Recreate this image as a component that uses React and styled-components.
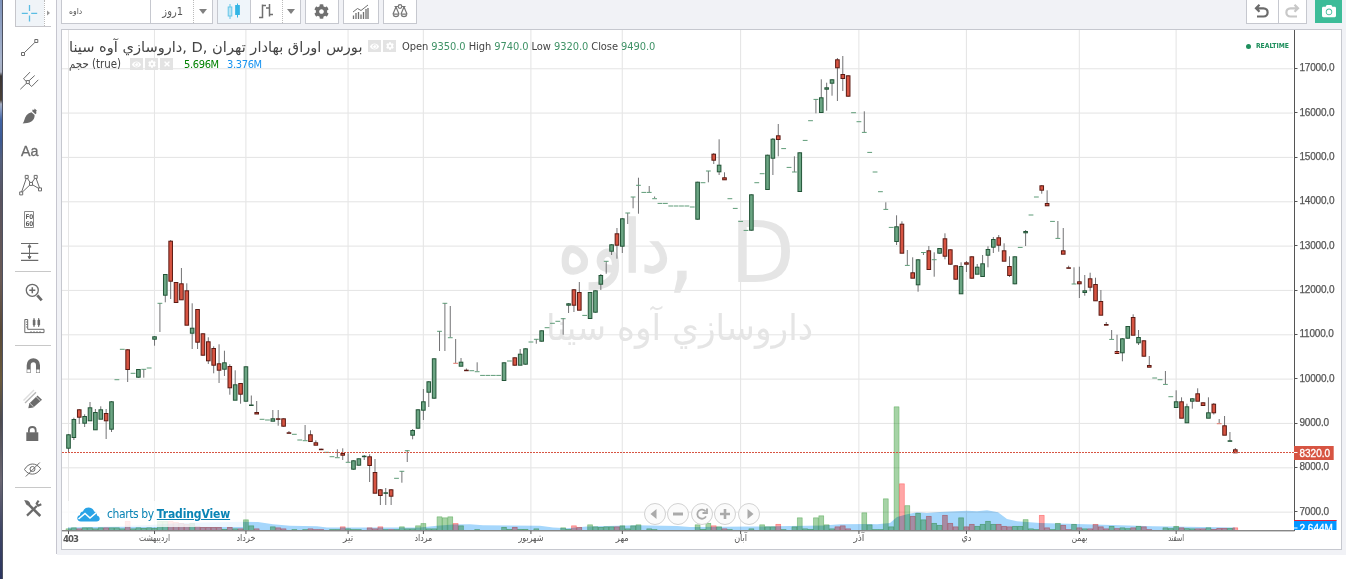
import React from "react";
import styled, { createGlobalStyle } from "styled-components";
import { FaCog, FaEye, FaCamera, FaTimes } from "react-icons/fa";

const UI_FONT = '"DejaVu Sans Condensed", "DejaVu Sans", sans-serif';

// geometry of the price pane
const FIRST_BAR = 68.5;
const BAR_STEP = 5.377;
const BASE_LINE = 530;
const barX = (i) => FIRST_BAR + BAR_STEP * i;
const priceY = (price) => 69 + ((17000 - price) / 1000) * 44.34;

// kind, body top, body bottom, high, low ("-" is a flat session)
const candles = [
  ["u", 434.3, 448.7, 434, 452.5], ["u", 419, 438, 417.7, 440], ["d", 409.3, 417.7, 409, 424],
  ["u", 416, 423.7, 414.3, 427], ["u", 407.3, 421.3, 402, 421], ["u", 412, 430.3, 409, 430],
  ["u", 409.3, 419.7, 406.3, 419], ["d", 413, 421.3, 409, 439], ["u", 401.3, 429.7, 401, 432],
  ["-", 379.7], ["-", 349.3], ["d", 349.3, 370, 349, 382], ["-", 373.3], ["u", 369, 377.7],
  ["-", 369.3, 369.3, 369, 377.7], ["-", 368], ["u", 336.3, 339.7, 336, 345.7],
  ["-", 303.3, 303.3, 303, 332], ["u", 274, 295.7, 274, 302.3], ["d", 240.7, 281.7, 240, 299],
  ["d", 282, 303], ["d", 283.3, 300.3, 268, 300], ["d", 290.3, 325.7, 283.3, 325],
  ["u", 327.7, 333.7, 303.3, 349], ["d", 309, 342.7, 309, 349], ["d", 333.3, 355.7],
  ["d", 341.3, 361.3, 337.3, 364], ["d", 348, 365.7, 346.3, 373.3], ["d", 363.3, 370.7, 344.3, 383],
  ["u", 362.3, 369.7, 350.7, 376], ["d", 366, 388.3, 364.3, 394.7], ["u", 384.3, 400.7, 370.3, 400],
  ["d", 383, 394.7, 383, 403.7], ["u", 366.3, 401.7], ["u", 404.5, 406, 395.5, 406],
  ["d", 412, 414.5, 401, 414], ["-", 419.3], ["-", 420], ["u", 418.3, 421.7, 410, 421],
  ["d", 418.3, 419.7, 410, 425.7], ["d", 418.3, 426.7], ["d", 432.3, 433.7, 431, 433], ["-", 434.3],
  ["-", 440], ["-", 440.7, 440.7, 425, 440], ["d", 434.3, 442, 430.3, 442], ["d", 442.3, 445.7, 440.3, 445],
  ["d", 448.7, 450], ["-", 452.3], ["-", 456.7], ["-", 457.7, 457.7, 449.3, 457],
  ["d", 453, 455.7, 448.3, 460], ["-", 462.3, 462.3, 453.3, 462], ["u", 460.3, 469.7], ["u", 458.3, 465.7],
  ["u", 455.7, 457, 455, 460], ["d", 456.3, 466, 454.3, 482], ["d", 472, 493.7, 459, 493],
  ["d", 489.3, 496, 489, 505], ["u", 492.3, 493.7, 488, 505], ["d", 489.3, 496.7, 489, 505],
  ["-", 478.3], ["-", 471.3, 471.3, 471, 482.7], ["-", 450.7, 450.7, 450, 462],
  ["u", 430, 435.7, 429, 439.3], ["u", 409.3, 428.7], ["u", 401.3, 410.7, 389, 420],
  ["u", 381.3, 392.7, 381, 407], ["u", 358.3, 398.7], ["-", 331.3, 331.3, 331, 351],
  ["-", 303.3, 303.3, 303, 351], ["-", 337.7, 337.7, 306, 337], ["r", 363.3, 363.3, 339, 363],
  ["u", 361.7, 366.7, 358, 366], ["d", 369.7, 371, 368.5, 371], ["-", 370.7], ["-", 371.7, 371.7, 362.3, 371],
  ["-", 375.4], ["-", 375.4], ["-", 375.4], ["-", 375.4], ["u", 362.3, 381], ["-", 361],
  ["d", 357.3, 365.7], ["u", 353.7, 365.7, 349, 365], ["u", 348.3, 364.7], ["-", 342],
  ["-", 339.3, 339.3, 339, 343.7], ["u", 330.3, 341.7], ["-", 327.7], ["-", 323.3], ["-", 321.3],
  ["-", 318.7, 318.7, 318, 334.7], ["u", 303.3, 305.7, 303, 313], ["d", 289.3, 305.7, 289, 312],
  ["d", 292, 310.7, 282, 310], ["-", 315.4], ["u", 292, 319], ["u", 290.3, 312.7],
  ["u", 275, 284.7, 274, 290], ["-", 261.3, 261.3, 261, 273.7], ["u", 244.3, 251.7, 244, 255],
  ["d", 233.3, 245.7, 228, 258.7], ["u", 218.3, 246.7, 218, 253], ["-", 213, 213, 213, 224],
  ["-", 197, 197, 197, 208.3], ["-", 185.3, 185.3, 177.7, 213.7], ["-", 192.4],
  ["-", 192.4, 192.4, 186, 192], ["-", 198.7, 198.7, 196.5, 198], ["-", 203.4], ["-", 203.4],
  ["-", 206], ["-", 206], ["-", 206], ["-", 206], ["-", 207], ["u", 181.7, 219.7], ["-", 182.7],
  ["-", 171, 171, 171, 182.3], ["d", 153.7, 160.7, 153, 164], ["u", 164.7, 172.3, 139.3, 175],
  ["d", 177.3, 180.3, 172.3, 180], ["-", 198.7], ["-", 208.4], ["-", 221.4], ["-", 230.4],
  ["u", 194.3, 230.7], ["-", 182.7], ["-", 173.7], ["u", 154.7, 190], ["u", 138.7, 158.7, 138, 175],
  ["d", 135.3, 140, 124, 156.3], ["-", 148.6], ["-", 167.4], ["-", 172, 172, 156.3, 172],
  ["u", 152.3, 192], ["-", 140.4], ["-", 120.7], ["-", 99.4, 99.4, 99, 113.3], ["u", 97.3, 113, 79.3, 113],
  ["u", 87.3, 89.7, 82.7, 110.7], ["u", 79.3, 83.7, 79, 95.7], ["d", 59.3, 68.3, 58, 101],
  ["d", 74, 79, 56, 91], ["d", 75.3, 96.7], ["-", 112.7], ["-", 121.7], ["-", 132.4, 132.4, 111.3, 132],
  ["-", 152.4], ["-", 172], ["-", 191.7], ["-", 209.4, 209.4, 202.3, 209], ["-", 227.4],
  ["u", 226.3, 242, 215.3, 245], ["d", 223.7, 253.7, 221.3, 253], ["-", 265.4, 265.4, 250, 265],
  ["d", 272.3, 278.7, 257.3, 278], ["u", 259.3, 285.3, 259, 291.7], ["-", 252.5, 252.5, 252, 255],
  ["d", 250.3, 270, 246, 270], ["-", 259.7, 259.7, 252.3, 276.7], ["u", 248, 253.7],
  ["d", 238.3, 256.7, 233.3, 259.3], ["d", 249.3, 264.7], ["d", 265.3, 279.7], ["u", 266, 294.3, 262.3, 294],
  ["d", 262.3, 264.7, 261, 272], ["d", 256.3, 278.7], ["u", 266.7, 274.7, 264, 274],
  ["u", 263.3, 277, 255, 277], ["u", 249, 255.7, 246.3, 267.3], ["u", 239, 247.7, 237, 253],
  ["d", 237.3, 245.7, 235, 251.7], ["d", 250.3, 261.7, 243.3, 261], ["d", 266, 276, 256.3, 277],
  ["u", 256.3, 284.3], ["-", 247.4], ["u", 231, 233.3, 230, 246], ["-", 215], ["-", 197],
  ["d", 185.3, 190.7, 185, 193.7], ["d", 203, 206.3, 190.3, 206], ["-", 221.4],
  ["-", 238.4, 238.4, 221, 238], ["d", 250.3, 254.7, 228, 254], ["d", 267.3, 268.7, 265.7, 268],
  ["-", 284, 284, 267.3, 284], ["d", 281.3, 284.3, 266.7, 298], ["u", 290.3, 293, 275, 295.7],
  ["d", 278.3, 287.7, 272.7, 291.3], ["d", 284, 301.3, 277.7, 301], ["d", 301, 315.7, 290, 315],
  ["d", 324, 325.7, 322, 325], ["-", 339.4, 339.4, 330, 339], ["d", 351, 354, 334.7, 354],
  ["u", 338.3, 353.3, 338, 361.3], ["u", 326, 338.7], ["d", 317, 335.7, 314.3, 335],
  ["u", 337, 343.3, 330, 345], ["d", 340.3, 356.7], ["d", 365, 367.7, 356, 367], ["-", 378],
  ["-", 379.7], ["-", 384.4, 384.4, 371, 384], ["-", 396.7], ["u", 401.3, 408, 390.3, 408],
  ["d", 401.3, 418.7, 397.3, 418], ["u", 406.3, 423.3, 403.7, 423], ["u", 398.3, 401.7, 398, 408.7],
  ["d", 393.3, 401.7, 388.3, 401], ["d", 402.3, 406], ["u", 412.3, 418.7, 397.3, 418],
  ["d", 403.7, 413.3, 403, 414.5], ["r", 423.7, 423.7, 419, 423], ["d", 425.3, 435.7, 416, 435],
  ["u", 440.3, 441.5, 432, 441], ["d", 449.3, 453.3, 448, 453],
];

// bar index -> [kind, height]
const volumes = {
  0: ["u", 1.5], 1: ["u", 2.5], 2: ["d", 1.5], 3: ["u", 2.5], 4: ["u", 2.5], 5: ["u", 1.5], 6: ["u", 2.5],
  7: ["d", 2.5], 8: ["u", 2.5], 9: ["u", 2.5], 10: ["u", 1.5], 11: ["d", 9], 12: ["u", 1.5], 13: ["u", 2.5],
  14: ["u", 2], 15: ["u", 2.5], 16: ["u", 2], 17: ["u", 9], 18: ["u", 9], 19: ["d", 9], 20: ["d", 8],
  21: ["d", 7], 22: ["d", 6], 23: ["u", 7], 24: ["d", 4], 25: ["d", 3], 26: ["d", 3], 27: ["d", 3],
  28: ["d", 3], 29: ["u", 1], 30: ["d", 3], 31: ["u", 1.5], 32: ["d", 1.5], 33: ["u", 10.5], 34: ["u", 4.5],
  35: ["d", 1.5], 38: ["u", 3.5], 39: ["d", 2.5], 40: ["d", 1.5], 42: ["u", 0.8], 44: ["u", 0.8],
  45: ["d", 1.5], 46: ["d", 0.8], 47: ["d", 0.8], 49: ["u", 0.8], 50: ["u", 0.8], 51: ["d", 3.5],
  52: ["u", 1.5], 53: ["u", 0.8], 54: ["u", 0.8], 56: ["d", 2.5], 57: ["d", 1.5], 58: ["d", 3.5],
  59: ["u", 0.8], 60: ["d", 0.8], 61: ["u", 0.8], 62: ["u", 3.5], 63: ["u", 1.5], 64: ["u", 1.5],
  65: ["u", 4.5], 66: ["u", 6.8], 67: ["u", 1.5], 68: ["u", 1.5], 69: ["u", 13.5], 70: ["u", 12.5],
  71: ["u", 13.5], 72: ["d", 6.8], 73: ["u", 4.5], 76: ["u", 0.8], 81: ["u", 3], 82: ["u", 1],
  83: ["d", 3], 84: ["u", 1], 85: ["u", 1], 87: ["u", 1.5], 92: ["u", 2.5], 93: ["u", 1], 94: ["d", 4.5],
  95: ["d", 3], 97: ["u", 5.5], 98: ["u", 3.5], 99: ["u", 3], 100: ["u", 3.5], 101: ["u", 3.5],
  102: ["d", 3.5], 103: ["u", 4.5], 104: ["u", 1.5], 105: ["u", 4.5], 106: ["u", 5.5], 108: ["u", 1.5],
  109: ["u", 0.8], 117: ["u", 5.5], 118: ["u", 1], 119: ["u", 7], 120: ["d", 4.5], 121: ["u", 3.5],
  122: ["d", 1.5], 123: ["u", 0.8], 127: ["u", 1.5], 129: ["u", 5.5], 130: ["u", 3.5], 131: ["u", 3.5],
  132: ["d", 6], 133: ["u", 0.8], 135: ["u", 3.5], 136: ["u", 12.5], 137: ["u", 1.5], 138: ["u", 1],
  139: ["u", 12.5], 140: ["u", 14.5], 141: ["u", 5.5], 142: ["u", 1.5], 143: ["d", 3.5], 144: ["d", 4.5],
  145: ["d", 1.5], 148: ["u", 17.5], 149: ["u", 5.5], 150: ["u", 0.8], 151: ["u", 0.8], 152: ["u", 31.5],
  153: ["u", 3.5], 154: ["u", 123.5], 155: ["d", 46.5], 156: ["u", 24.7], 157: ["d", 14], 158: ["u", 17],
  159: ["u", 10.5], 160: ["d", 14], 161: ["u", 7], 162: ["u", 5], 163: ["d", 15], 164: ["d", 7],
  165: ["d", 3.5], 166: ["u", 12.5], 167: ["d", 3.5], 168: ["d", 6], 169: ["u", 4], 170: ["u", 6],
  171: ["u", 9], 172: ["u", 6], 173: ["d", 6], 174: ["d", 4], 175: ["d", 3.5], 176: ["u", 4], 177: ["u", 4],
  178: ["u", 10.7], 179: ["u", 1.5], 180: ["u", 0.8], 181: ["d", 15], 182: ["d", 2.5], 183: ["u", 0.8],
  184: ["u", 7], 185: ["d", 5], 186: ["d", 0.8], 187: ["u", 6], 188: ["d", 2.5], 189: ["u", 1.5],
  190: ["d", 1.5], 191: ["d", 6], 192: ["d", 3.5], 193: ["d", 1.5], 194: ["u", 4], 195: ["d", 1.8],
  196: ["u", 2.5], 197: ["u", 1.8], 198: ["d", 2.5], 199: ["u", 4], 200: ["d", 3.5], 201: ["d", 0.8],
  204: ["u", 2.5], 205: ["u", 1.8], 206: ["u", 4], 207: ["d", 2.5], 208: ["u", 1.8], 209: ["u", 1.5],
  210: ["d", 1.5], 211: ["d", 1.5], 212: ["u", 2.5], 213: ["d", 1], 214: ["d", 2], 215: ["d", 2],
  216: ["u", 2], 217: ["d", 2.5],
};

const averageVolume = [
  [68, 527.5], [90, 527], [150, 525], [180, 523], [243, 521.8], [258, 522], [273, 524.3], [290, 525.7],
  [317, 526.3], [327, 527.4], [420, 527.6], [437, 525.7], [453, 524.6], [470, 524.3], [483, 525.3],
  [540, 525.7], [553, 527.4], [567, 528.3], [587, 526.6], [637, 525.3], [677, 526], [690, 527],
  [753, 526.6], [790, 526], [823, 525.6], [840, 524.3], [870, 524], [877, 524.3], [890, 523],
  [897, 517], [907, 514.3], [917, 512.3], [927, 513], [940, 512], [967, 510.7], [977, 511.3],
  [987, 510.3], [998, 512.3], [1007, 519], [1017, 521.3], [1040, 523], [1077, 524], [1120, 525.3],
  [1153, 526.3], [1235, 527.5],
];

const months = [
  { name: "ارديبهشت", bar: 16, width: 31 },
  { name: "خرداد", bar: 33, width: 19 },
  { name: "تير", bar: 52, width: 10 },
  { name: "مرداد", bar: 66, width: 18 },
  { name: "شهريور", bar: 86, width: 25 },
  { name: "مهر", bar: 103, width: 13 },
  { name: "آبان", bar: 125, width: 13 },
  { name: "آذر", bar: 147, width: 11 },
  { name: "دي", bar: 167, width: 10 },
  { name: "بهمن", bar: 188, width: 16 },
  { name: "اسفند", bar: 206, width: 16 },
];

const prices = [17000, 16000, 15000, 14000, 13000, 12000, 11000, 10000, 9000, 8000, 7000];

function Candle({ x, data }) {
  const [kind, top, bottom = top, high = top, low = bottom] = data;
  const flat = kind === "-" || kind === "r";
  const colors = kind === "u" ? ["#6ba583", "#225437"] : ["#d75442", "#5b1a13"];
  return (
    <g>
      {low > high && <rect x={x - 0.5} y={high} width="1" height={low - high} fill="#737375" />}
      {flat ? (
        <rect x={x - 2.4} y={top - 0.5} width="4.8" height="1" fill={kind === "r" ? "#e0776a" : "#5f9c78"} />
      ) : (
        <rect
          x={x - 1.8}
          y={top + 0.5}
          width="3.6"
          height={Math.max(bottom - top - 1, 0.5)}
          fill={colors[0]}
          stroke={colors[1]}
        />
      )}
    </g>
  );
}

function VolumeBar({ x, kind, height }) {
  const color = kind === "u" ? "#008000" : "#ff0000";
  return (
    <g fill={color}>
      <rect x={x - 2.7} y={BASE_LINE - height} width="5.4" height={height} fillOpacity="0.35" />
      <path
        d={`M${x - 2.4} ${BASE_LINE}V${BASE_LINE - height + 0.4}h4.8V${BASE_LINE}`}
        fill="none"
        stroke={color}
        strokeOpacity="0.22"
        strokeWidth="0.8"
      />
    </g>
  );
}

function Chart() {
  const area = averageVolume.map((p) => p.join(" ")).join("L");
  return (
    <ChartSvg viewBox="62 30 1279 519">
      <g fill="#e6e6e6">
        {months.map((m) => (
          <rect key={m.bar} x={barX(m.bar) - 0.6} y="30" width="1.1" height="501" />
        ))}
        <rect x="68" y="30" width="1" height="501" />
        {prices.map((p) => (
          <rect key={p} x="62" y={priceY(p) - 0.8} width="1231" height="1.1" />
        ))}
      </g>

      <g fill="#e5e5e5" fontFamily={UI_FONT}>
        <g stroke="#e5e5e5" strokeWidth="1.4">
          <text x="558" y="272" fontSize="72" textLength="112" lengthAdjust="spacingAndGlyphs">داوه</text>
          <text x="669" y="281.5" fontSize="85">,</text>
        </g>
        <text x="730" y="281.5" fontSize="85" textLength="65" lengthAdjust="spacingAndGlyphs">D</text>
        <text x="546" y="340" fontSize="36" textLength="267" lengthAdjust="spacingAndGlyphs">داروسازي آوه سينا</text>
      </g>

      {Object.entries(volumes).map(([i, [kind, height]]) => (
        <VolumeBar key={i} x={barX(Number(i))} kind={kind} height={height} />
      ))}
      <AverageArea d={`M${area}V${BASE_LINE}H68Z`} />

      {candles.map((c, i) => (
        <Candle key={i} x={barX(i)} data={c} />
      ))}

      <path d="M62 452.5H1294" stroke="#d75442" strokeDasharray="2 1" />

      <path d="M62 530.8H1294.5M1294.5 30V531" stroke="#555" fill="none" />
      <g fill="#555" fontFamily='"Liberation Sans", sans-serif' fontSize="10" letterSpacing="-0.2">
        {prices.map((p) => (
          <React.Fragment key={p}>
            <rect x="1294" y={Math.round(priceY(p)) - 1} width="3.5" height="1" />
            <AxisText x="1299.5" y={priceY(p) + 2.4}>{`${p}.0`}</AxisText>
          </React.Fragment>
        ))}
      </g>

      <g fontFamily={UI_FONT} fontSize="9.5" fill="#555">
        <rect x="68" y="531" width="1" height="3" />
        <text x="63" y="542" fontWeight="bold" fontSize="9.5" textLength="16">403</text>
        {months.map((m) => (
          <React.Fragment key={m.bar}>
            <rect x={barX(m.bar) - 0.5} y="531" width="1" height="3" />
            <text
              x={barX(m.bar) - m.width / 2}
              y="541"
              textLength={m.width}
              lengthAdjust="spacingAndGlyphs"
            >
              {m.name}
            </text>
          </React.Fragment>
        ))}
      </g>

      <g fontFamily='"Liberation Sans", sans-serif' fontSize="10" fill="#fff">
        <rect x="1294" y="446" width="39.7" height="14" fill="#d75442" />
        <rect x="1294" y="452" width="3.5" height="1" />
        <text x="1299.5" y="457.3" stroke="#fff" strokeWidth="0.3">8320.0</text>
        <clipPath id="pane-bottom">
          <rect x="1294" y="518" width="46" height="12" />
        </clipPath>
        <g clipPath="url(#pane-bottom)">
          <rect x="1294" y="520" width="42.5" height="12" fill="#0496ff" />
          <rect x="1294" y="520" width="42.5" height="1" fill="#e5213c" />
          <rect x="1294" y="527.5" width="3.5" height="1" />
          <text x="1299.5" y="532.3" stroke="#fff" strokeWidth="0.3">2.644M</text>
        </g>
      </g>
    </ChartSvg>
  );
}

// Drawings of the left bar share one coordinate space, each one starts at its own offset.
const drawTools = [
  {
    top: 30,
    art: (
      <>
        <path d="M24.5 52.5L34.8 42.5" />
        <path d="M21.5 52.5h3v3h-3zM34.8 39.5h3v3h-3z" />
      </>
    ),
  },
  {
    top: 64.2,
    art: (
      <>
        <path d="M20.3 89.5L27 83M29 81L34.7 75.7M23.5 79L30 72.3M31.7 86.7L38.3 80M23.5 79L31.7 86.7" />
        <path d="M26.3 80.8h3v3h-3z" fill="#fff" />
      </>
    ),
  },
  {
    top: 98.4,
    art: (
      <g fill="#6b6b6b" stroke="none">
        <path d="M22.7 124C24.6 121.5 24.2 118.6 26.5 115.6C27.8 114 30 113.2 31.4 112.6L34.6 115.4C34.8 118 33.6 120.4 31.4 121.8C28.8 123.3 25.6 123.4 22.7 124Z" />
        <path d="M32.2 111.6L32.6 109.8L34.2 110.4L34.6 109L36.8 110.8L36 112.4L36.6 113.4L35.4 114.6Z" />
      </g>
    ),
  },
  {
    top: 132.6,
    art: (
      <text x="21" y="155.8" fontSize="14.2" fill="#6b6b6b" stroke="#6b6b6b" strokeWidth="0.3" fontFamily='"Liberation Sans", sans-serif'>
        Aa
      </text>
    ),
  },
  {
    top: 166.8,
    art: (
      <>
        <path d="M21.2 193L26.7 177L31 183.7L35.7 177L40 189L31 183.7Z" />
        <path
          fill="#fff"
          d="M19.7 191.7h3v3h-3zM25.2 175.2h3v3h-3zM29.5 182.2h3v3h-3zM34.2 175.2h3v3h-3zM38.5 187.7h3v3h-3z"
        />
      </>
    ),
  },
  {
    top: 201,
    art: (
      <>
        <path d="M24.5 211.5h9v16h-9z" stroke="#8a8a8a" />
        <g fontSize="6.5" fontWeight="bold" fill="#555" stroke="none" fontFamily='"DejaVu Sans Mono", monospace'>
          <text x="25.4" y="218.8">FO</text>
          <text x="25.4" y="225.6">6O</text>
        </g>
      </>
    ),
  },
  {
    top: 235.2,
    art: (
      <>
        <path d="M21 243.7h17.3M21 253.6h17.3M21 260.5h17.3" strokeWidth="1.2" />
        <path d="M29.5 245v14" />
        <path d="M28 247.3l1.500-2.400 1.500 2.400zM28 256.8l1.500 2.400 1.500-2.400z" fill="#6b6b6b" />
      </>
    ),
  },
];

const viewTools = [
  {
    top: 276,
    art: (
      <>
        <circle cx="32.3" cy="291.3" r="6" strokeWidth="1.3" />
        <path d="M29.3 291.3h6M32.3 288.3v6" strokeWidth="1.5" />
        <path d="M37.3 296.3L41.7 301.3" strokeWidth="2.8" />
      </>
    ),
  },
  {
    top: 308,
    art: (
      <>
        <path d="M24.8 318.5h2.9v9.8h16.3v3.3H24.8z" />
        <path d="M26 321h1.6M26 323.5h1.6M26 326h1.6M31 330v1.6M34 330v1.6M37 330v1.6M40 330v1.6" strokeWidth="0.8" />
        <path d="M34 317v9M38.7 317v9" />
        <path d="M33.3 319h1.6v5h-1.6zM38 319h1.6v5h-1.6z" fill="#6b6b6b" />
      </>
    ),
  },
];

const editTools = [
  {
    top: 349,
    art: (
      <>
        <path d="M28.7 373V365.2C28.7 358.5 38 358.5 38 365.2V373" strokeWidth="4" />
        <path d="M27.2 369.5h3v3h-3zM36.5 369.5h3v3h-3z" fill="#fff" stroke="none" />
      </>
    ),
  },
  {
    top: 383,
    art: (
      <>
        <path d="M23.5 400.5L34 390" stroke="#dedede" strokeWidth="1.4" />
        <path d="M25 403L36 392.2" stroke="#b5b5b5" strokeWidth="1.3" />
        <path d="M28.3 408.3L29.3 403.6L37.5 395.6L42 399.8L33.3 407.4Z" fill="#6b6b6b" stroke="none" />
        <path d="M30 403.4L33.6 406.8M36 396.6L40.4 400.8" stroke="#fff" strokeWidth="0.7" />
      </>
    ),
  },
  {
    top: 416,
    art: (
      <>
        <path d="M26.3 431.3h12v8.700h-12z" fill="#6b6b6b" stroke="none" />
        <path d="M28.900 431.800V429.300C28.900 424.900 35.700 424.900 35.700 429.300V431.800" strokeWidth="1.8" />
      </>
    ),
  },
  {
    top: 452,
    art: (
      <>
        <path d="M24.5 470.5C28.5 463.3 36 463.3 40.7 469.8C36.5 476.8 28.5 476.8 24.5 470.5Z" />
        <circle cx="32.5" cy="470" r="2.5" />
        <path d="M25.8 477.5L39.8 463.5" />
      </>
    ),
  },
];

const settingsTools = [
  {
    top: 491,
    art: (
      <>
        <path d="M29 504.8L40.3 516" strokeWidth="2.6" />
        <path d="M24 500.3C27.5 499.6 30.3 501.5 30.3 504.3C30.3 506 28 506.2 26.5 504.8C25.6 503.8 25.2 501.5 24 500.3Z" fill="#6b6b6b" stroke="none" />
        <path d="M27 515.6L36.8 506" strokeWidth="2.2" />
        <path d="M38.6 500.6L36.7 503.4L38.2 505.6L41.3 504.3" strokeWidth="2.1" />
      </>
    ),
  },
];

function ToolGroup({ tools }) {
  return tools.map((tool) => (
    <Tool key={tool.top} viewBox={`12 ${tool.top} 42 34`}>
      {tool.art}
    </Tool>
  ));
}

function LeftBar() {
  return (
    <Sidebar>
      <CrossTool>
        <svg width="28" height="26" viewBox="16 0 28 26" stroke="#5bbde3" strokeWidth="1.3">
          <path d="M21.8 13.4h6M31.2 13.4h6M29.5 5v6M29.5 15.5v6" />
        </svg>
        <CrossMore>
          <svg width="4" height="6" viewBox="0 0 4 6">
            <path d="M0 0.5L3 3L0 5.5Z" fill="#999" />
          </svg>
        </CrossMore>
      </CrossTool>
      <Group $height="244.5"><ToolGroup tools={drawTools} /></Group>
      <Group $height="74"><ToolGroup tools={viewTools} /></Group>
      <Group $height="142"><ToolGroup tools={editTools} /></Group>
      <Group $height="60" $last><ToolGroup tools={settingsTools} /></Group>
    </Sidebar>
  );
}

function TopBar() {
  return (
    <Toolbar>
      <Box $width="151.5">
        <Symbol dir="rtl">داوه</Symbol>
        <Interval dir="rtl">1روز</Interval>
        <Arrow />
      </Box>
      <Box $width="84">
        <Button $active $width="32">
          <svg width="14" height="20" viewBox="0 0 14 20">
            <path d="M3 2v15" stroke="#65c5e8" />
            <rect x="1.2" y="5" width="3.6" height="9" fill="#b8e5f5" stroke="#65c5e8" />
            <path d="M10.5 1.500v14" stroke="#33b5e5" />
            <rect x="8.7" y="3.500" width="3.6" height="9" fill="#33b5e5" stroke="#33b5e5" />
          </svg>
        </Button>
        <Button $width="33">
          <svg width="18" height="18" viewBox="0 0 18 18" fill="none" stroke="#707070" strokeWidth="1.5">
            <path d="M2 14.500H5.500M5.500 15.200V1.500M5.500 2.500H9" />
            <path d="M9 5H12.500M12.500 1V13.500M12.500 11.500H16" />
          </svg>
        </Button>
        <Arrow />
      </Box>
      <Box $width="34.5">
        <Button><FaCog size={15} color="#707070" /></Button>
      </Box>
      <Box $width="35.5">
        <Button>
          <svg width="17" height="16" viewBox="0 0 17 16" fill="none" stroke="#707070">
            <path d="M1 8L5.5 4.5L9 6.5L16 1" />
            <path d="M1.5 15v-3.5M4 15v-6M6.5 15V8M9 15v-4.5M11.5 15V8M14 15V5M16 15V4" strokeWidth="1.3" />
          </svg>
        </Button>
      </Box>
      <Box $width="34.5">
        <Button>
          <svg width="16" height="15" viewBox="0 0 16 15" fill="none" stroke="#777" strokeWidth="1.2">
            <path d="M2.5 2.5h3.5M10 2.5h3.5M4 3L1 10M4 3L7 10M12 3L9 10M12 3L15 10M0.8 10.2h6.5M8.7 10.2h6.5" />
            <path d="M1.2 10.5C1.8 13.3 6.2 13.3 6.8 10.5M9.2 10.5C9.8 13.3 14.2 13.3 14.8 10.5" />
            <circle cx="8" cy="2.5" r="1.8" />
          </svg>
        </Button>
      </Box>
      <Spacer />
      <Box $width="61.5">
        <Button $width="31">
          <svg width="16" height="15" viewBox="0 0 16 15" fill="none" stroke="#6b6b6b" strokeWidth="2.2">
            <path d="M5.5 0.8L2 4.3L5.5 7.800M2.5 4.3H9.5C15 4.3 15 12.5 9.5 12.5H3" />
          </svg>
        </Button>
        <Divider />
        <Button>
          <svg width="16" height="15" viewBox="0 0 16 15" fill="none" stroke="#c8c8c8" strokeWidth="2.2">
            <path d="M10.5 0.8L14 4.3L10.5 7.800M13.5 4.3H6.5C1 4.3 1 12.5 6.5 12.5H13" />
          </svg>
        </Button>
      </Box>
      <Snapshot>
        <FaCamera size={14} color="#fff" />
      </Snapshot>
    </Toolbar>
  );
}

function Legend() {
  return (
    <LegendBox>
      <LegendRow>
        <Title>داروسازي آوه سينا, D, بورس اوراق بهادار تهران</Title>
        <MiniButtons $left="6">
          <Mini><FaEye size={9} /></Mini>
          <Mini><FaCog size={8} /></Mini>
        </MiniButtons>
        <Quotes>
          Open <b>9350.0</b> High <b>9740.0</b> Low <b>9320.0</b> Close <b>9490.0</b>
        </Quotes>
      </LegendRow>
      <LegendRow>
        <Study>حجم (true)</Study>
        <MiniButtons $left="8">
          <Mini><FaEye size={9} /></Mini>
          <Mini><FaCog size={8} /></Mini>
          <Mini><FaTimes size={8} /></Mini>
        </MiniButtons>
        <Value $color="#008000" $left="11">5.696M</Value>
        <Value $color="#1793f0" $left="8">3.376M</Value>
      </LegendRow>
    </LegendBox>
  );
}

function Credits() {
  return (
    <CreditsBox>
      <svg width="23" height="15" viewBox="0 0 23 15">
        <path
          d="M4 14.5C1.5 14.5 0.3 13 0.3 11.2C0.3 9.5 1.5 8.3 3 8C3 5.8 4.3 4.6 6 4.5C7 1.8 9 0.5 11.5 0.5C14.5 0.5 16.5 2.3 17.2 4.5C19.2 5 20 6.5 20 8.5C21.8 9 22.7 10.3 22.7 11.8C22.7 13.5 21.5 14.5 19.5 14.5Z"
          fill="#29a3e6"
        />
        <path d="M1.500 12L8 6.5L13 11L19.5 5.5" fill="none" stroke="#fff" strokeWidth="1.6" />
      </svg>
      <span>charts by <strong>TradingView</strong></span>
    </CreditsBox>
  );
}

const navIcons = [
  <path key="left" d="M6.5 0L0.5 5L6.5 10Z" />,
  <path key="minus" d="M0 3.5h10v3h-10z" />,
  <path key="reset" d="M9 7.3A4.600 4.600 0 1 1 8.7 2.5M10 -0.500V4H5.5" fill="none" stroke="#aaa" strokeWidth="1.8" />,
  <path key="plus" d="M3.7 0h2.6v3.7H10v2.6H6.3V10H3.7V6.3H0V3.7h3.7z" />,
  <path key="right" d="M3.5 0L9.5 5L3.5 10Z" />,
];

export default function App() {
  return (
    <Page>
      <GlobalStyle />
      <Desktop />
      <LeftBar />
      <Main>
        <TopBar />
        <Frame>
          <Chart />
          <Legend />
          <Realtime><i />REALTIME</Realtime>
          <Credits />
          <Navigation>
            {navIcons.map((icon) => (
              <NavButton key={icon.key}>
                <svg width="10" height="10" viewBox="0 0 10 10" fill="#aaa" overflow="visible">{icon}</svg>
              </NavButton>
            ))}
          </Navigation>
        </Frame>
      </Main>
    </Page>
  );
}

const GlobalStyle = createGlobalStyle`
  * {
    box-sizing: border-box;
  }

  body {
    margin: 0;
    overflow: hidden;
    background: #fff;
    font-family: ${UI_FONT};
  }

  svg {
    display: block;
    flex: none;
  }
`;

const Page = styled.div`
  display: flex;
  align-items: flex-start;
  width: 1351px;
  height: 579px;
`;

const Desktop = styled.div`
  width: 3px;
  height: 579px;
  border-right: 1px solid #4e5260;
  background: linear-gradient(
    #7e93bb 0, #a9b5cd 60px, #a9b0c2 72px, #3a3534 76px, #4a4038 100px, #a5adc0 104px,
    #8fa0c4 108px, #4264a4 120px, #3c5a94 140px, #55607c 160px, #59535f 200px, #6a5a55 280px,
    #5a4a38 330px, #6b5a3c 380px, #4d4b50 420px, #6a6672 480px, #3f4666 530px, #2b3560 579px
  );
`;

const Sidebar = styled.div`
  width: 54px;
  height: 554px;
  padding: 0 5px 0 12px;
  border-right: 1px solid #c6c6cf;
  background: #fff;
`;

const CrossTool = styled.div`
  display: flex;
  width: 36px;
  height: 27px;
  border: 1px solid #c6c6cb;
  border-top: 0;
  background: #f0f4f8;
`;

const CrossMore = styled.div`
  display: flex;
  align-items: center;
  flex: 1;
  padding-left: 2px;
  border-left: 1px dotted #bbb;
  background: #fff;
`;

const Group = styled.div`
  display: flex;
  flex-direction: column;
  width: 36px;
  height: ${(p) => p.$height}px;
  padding-top: 3px;
  border-bottom: ${(p) => (p.$last ? 0 : 1)}px solid #c8c8c8;
`;

const Tool = styled.svg`
  width: 42px;
  height: 34px;
  margin: 0 -3px 0.2px;
  fill: none;
  stroke: #6b6b6b;
`;

const Main = styled.div`
  width: 1289px;
  height: 555px;
  padding-left: 4px;
  background: #f1f2f6;
`;

const Toolbar = styled.div`
  display: flex;
  gap: 4px;
  height: 29px;
  padding-right: 4px;
`;

const Box = styled.div`
  display: flex;
  width: ${(p) => p.$width}px;
  height: 24px;
  border: 1px solid #c6c8cf;
  border-top: 0;
  background: #fff;
`;

const Symbol = styled.div`
  width: 89px;
  padding: 6px 0 0 7px;
  border-right: 1px solid #c6c8cf;
  color: #555;
  font-size: 8.5px;
  text-align: left;
  white-space: nowrap;
`;

const Interval = styled.div`
  width: 43px;
  padding: 5px 10px 0 0;
  border-right: 1px dotted #bbb;
  color: #555;
  font-size: 11px;
  white-space: nowrap;
`;

const Arrow = styled.div`
  flex: 1;

  &::after {
    content: "";
    display: block;
    width: 0;
    margin: 9px auto 0;
    border: 4px solid transparent;
    border-top: 5px solid #808080;
  }
`;

const Button = styled.div`
  display: flex;
  align-items: center;
  justify-content: center;
  width: ${(p) => (p.$width ? `${p.$width}px` : "auto")};
  flex: ${(p) => (p.$width ? "none" : 1)};
  background: ${(p) => (p.$active ? "#eff5fa" : "#fff")};

  & + & {
    border-left: 1px solid #c6c8cf;
    border-right: 1px dotted #bbb;
  }
`;

const Divider = styled.div`
  width: 1px;
  background: #c6c8cf;
`;

const Spacer = styled.div`
  flex: 1;
`;

const Snapshot = styled.div`
  display: flex;
  align-items: center;
  justify-content: center;
  width: 27px;
  height: 23px;
  margin-left: 4px;
  padding-bottom: 2px;
  background: #3cbc98;
`;

const Frame = styled.div`
  position: relative;
  width: 1281px;
  height: 521px;
  border: 1px solid #c6c8cf;
  background: #fff;
`;

const ChartSvg = styled.svg`
  width: 1279px;
  height: 519px;
`;

const AxisText = styled.text`
  stroke: #555;
  stroke-width: 0.25px;
`;

const AverageArea = styled.path`
  fill: #a6d7fc;
  mix-blend-mode: multiply;
`;

const LegendBox = styled.div`
  position: absolute;
  top: 7px;
  left: 7px;
`;

const LegendRow = styled.div`
  display: flex;
  align-items: center;
  height: 18px;
  color: #444;
  white-space: nowrap;
`;

const Title = styled.div`
  width: 293px;
  font-family: "DejaVu Sans", sans-serif;
  font-size: 14.6px;
`;

const Study = styled.div`
  width: 53px;
  font-size: 11.4px;
`;

const MiniButtons = styled.div`
  display: flex;
  gap: 2px;
  margin-left: ${(p) => p.$left}px;
`;

const Mini = styled.div`
  display: flex;
  align-items: center;
  justify-content: center;
  width: 13px;
  height: 12px;
  background: #e3e3e3;
  color: #fff;
`;

const Quotes = styled.div`
  margin-left: 6px;
  padding-top: 1px;
  font-size: 11px;
  letter-spacing: -0.06px;

  b {
    color: #3f9266;
    font-weight: normal;
  }
`;

const Value = styled.div`
  width: 35px;
  margin-left: ${(p) => p.$left}px;
  color: ${(p) => p.$color};
  font-size: 11px;
  letter-spacing: -0.35px;
`;

const Realtime = styled.div`
  position: absolute;
  top: 12px;
  right: 52px;
  display: flex;
  align-items: center;
  gap: 5px;
  color: #1e8f5d;
  font-size: 6.8px;
  font-weight: bold;

  i {
    width: 5px;
    height: 5px;
    border-radius: 50%;
    background: #1e8f5d;
  }
`;

const CreditsBox = styled.div`
  position: absolute;
  left: 0;
  bottom: 22px;
  display: flex;
  align-items: center;
  gap: 7px;
  width: 181px;
  height: 26px;
  padding-left: 15px;
  background: rgba(255, 255, 255, 0.8);
  color: #0a84b5;
  font-size: 12px;
  letter-spacing: -0.4px;
  white-space: nowrap;

  strong {
    letter-spacing: -0.12px;
    text-decoration: underline;
  }
`;

const Navigation = styled.div`
  position: absolute;
  left: 582px;
  bottom: 24.5px;
  display: flex;
  gap: 1.4px;
`;

const NavButton = styled.div`
  display: flex;
  align-items: center;
  justify-content: center;
  width: 22px;
  height: 22px;
  border: 1.5px solid #d2d2d2;
  border-radius: 50%;
  background: rgba(250, 250, 250, 0.85);
`;
